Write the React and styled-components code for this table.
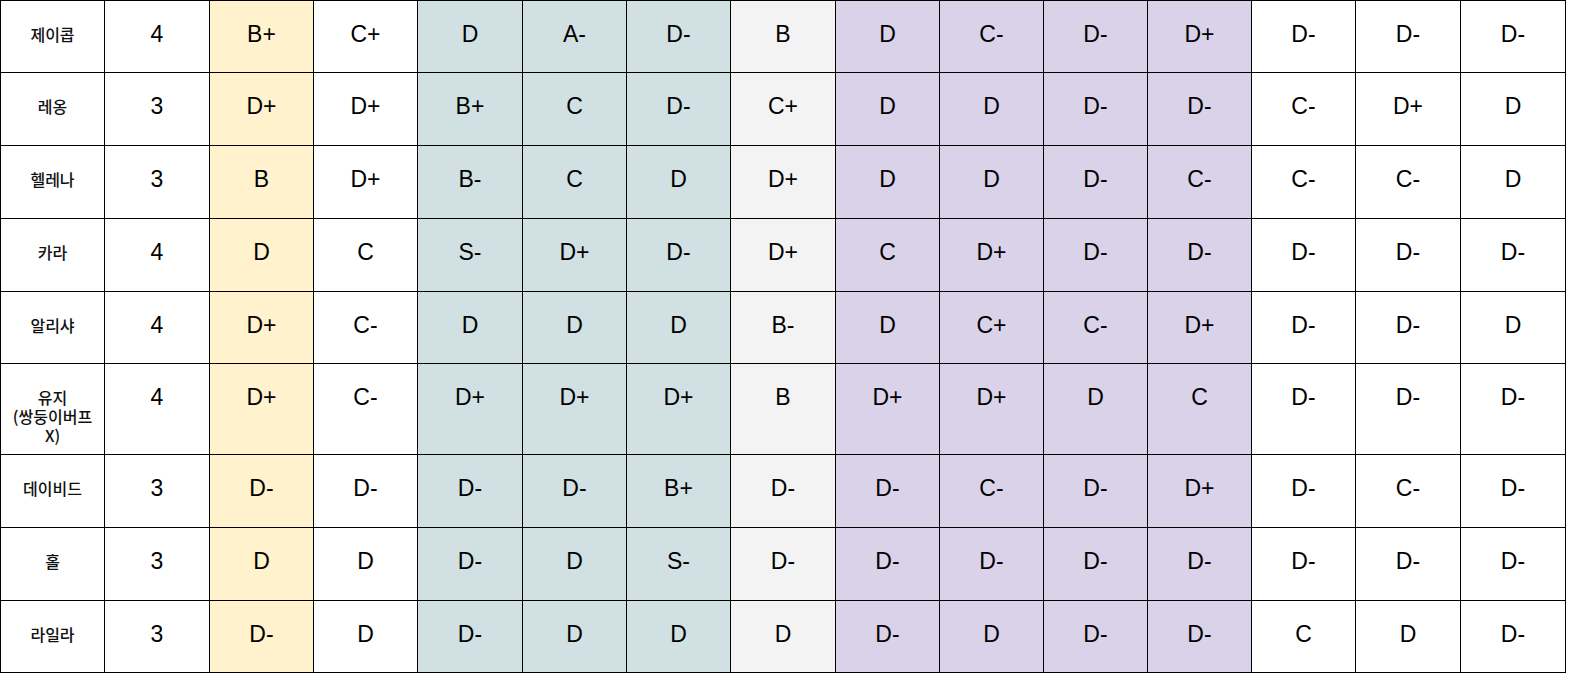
import React from "react";
import styled, { createGlobalStyle } from "styled-components";

const GlobalStyle = createGlobalStyle`
  body {
    margin: 0;
    background: #ffffff;
    font-family: "Liberation Sans", "Noto Sans CJK KR", sans-serif;
  }
`;

const COLS = [104, 105, 104, 104, 105, 104, 104, 105, 104, 104, 104, 104, 104, 105, 105];
const ROW_H = [72, 73, 73, 73, 72, 91, 73, 73, 72];

const YELLOW = "#fff2cc";
const TEAL = "#d0e0e3";
const GRAY = "#f3f3f3";
const LAV = "#d9d2e9";

// background per grade column (index 0 = first grade column)
const gradeBg = [YELLOW, null, TEAL, TEAL, TEAL, GRAY, LAV, LAV, LAV, LAV, null, null, null];

const rows = [
  ["제이콥", "4", "B+ C+ D A- D- B D C- D- D+ D- D- D-"],
  ["레옹", "3", "D+ D+ B+ C D- C+ D D D- D- C- D+ D"],
  ["헬레나", "3", "B D+ B- C D D+ D D D- C- C- C- D"],
  ["카라", "4", "D C S- D+ D- D+ C D+ D- D- D- D- D-"],
  ["알리샤", "4", "D+ C- D D D B- D C+ C- D+ D- D- D"],
  ["유지\n(쌍둥이버프\nX)", "4", "D+ C- D+ D+ D+ B D+ D+ D C D- D- D-"],
  ["데이비드", "3", "D- D- D- D- B+ D- D- C- D- D+ D- C- D-"],
  ["홀", "3", "D D D- D S- D- D- D- D- D- D- D- D-"],
  ["라일라", "3", "D- D D- D D D D- D D- D- C D D-"],
];

const Sheet = styled.div`
  display: grid;
  grid-template-columns: ${COLS.map((w) => `${w}px`).join(" ")};
  grid-template-rows: ${ROW_H.map((h) => `${h}px`).join(" ")};
  width: fit-content;
  border-left: 1px solid #000;
  border-top: 1px solid #000;
`;

const Cell = styled.div`
  box-sizing: border-box;
  border-right: 1px solid #000;
  border-bottom: 1px solid #000;
  background: ${(p) => p.$bg || "#ffffff"};
  text-align: center;
  color: #000;
  overflow: hidden;
`;

const NameCell = styled(Cell)`
  padding: 24px 2px 0;
  font-family: "Noto Sans CJK KR", "Liberation Sans", sans-serif;
  font-size: 16px;
  line-height: 19px;
  font-weight: 500;
  white-space: pre-line;
  color: #111;
`;

const GradeCell = styled(Cell)`
  padding-top: 20px;
  font-size: 23px;
  line-height: 26px;
  font-family: "Liberation Sans", Arial, sans-serif;
`;

export default function App() {
  return (
    <>
      <GlobalStyle />
      <Sheet>
        {rows.map(([name, count, grades]) => (
          <React.Fragment key={name}>
            <NameCell>{name}</NameCell>
            <GradeCell>{count}</GradeCell>
            {grades.split(" ").map((g, i) => (
              <GradeCell key={i} $bg={gradeBg[i]}>
                {g}
              </GradeCell>
            ))}
          </React.Fragment>
        ))}
      </Sheet>
    </>
  );
}
